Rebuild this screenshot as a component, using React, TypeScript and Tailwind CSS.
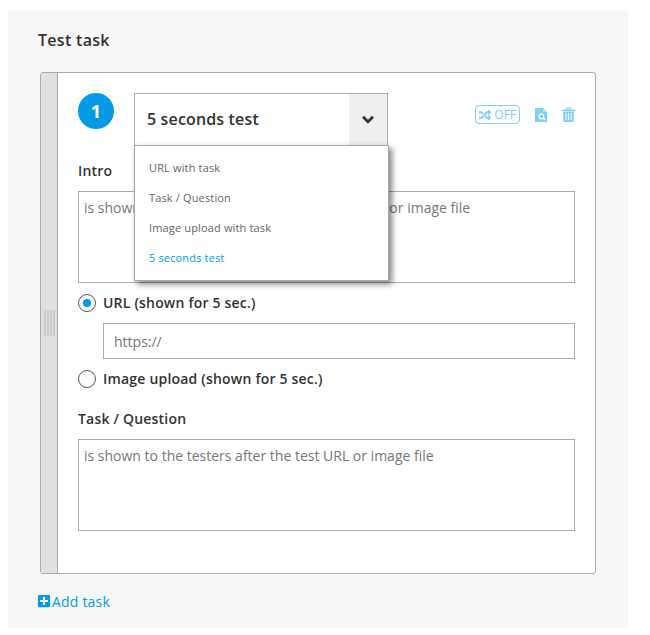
import { FaPlusSquare, FaRandom } from 'react-icons/fa';

const OPTIONS = ['URL with task', 'Task / Question', 'Image upload with task', '5 seconds test'];

function FileSearchIcon() {
  return (
    <svg width="12" height="14" viewBox="0 0 12 14" className="block" aria-hidden>
      <path d="M0 0h8l4 4v10H0z" fill="#7fd1f5" />
      <path d="M8 0l4 4H8z" fill="#b5e4fa" />
      <circle cx="6.4" cy="8.4" r="2.3" fill="none" stroke="#fff" strokeWidth="1.3" />
      <path d="M8 10l2 2" stroke="#fff" strokeWidth="1.4" />
    </svg>
  );
}

function TrashIcon() {
  return (
    <svg width="13" height="15" viewBox="0 0 13 15" className="block" aria-hidden>
      <path d="M4.5 2.5V1h4v1.5" fill="none" stroke="#7fd1f5" strokeWidth="1.2" />
      <path d="M0 2.5h13v1.5H0z" fill="#7fd1f5" />
      <path d="M1.2 4.6h10.6V13.5a1.5 1.5 0 0 1-1.5 1.5H2.7a1.5 1.5 0 0 1-1.5-1.5z" fill="#7fd1f5" />
      <path d="M4 6v7M6.5 6v7M9 6v7" stroke="#fff" strokeWidth="1" />
    </svg>
  );
}

function Chevron() {
  return (
    <svg width="14" height="9" viewBox="0 0 14 9" className="block" aria-hidden>
      <path d="M2 1.8l5 5 5-5" fill="none" stroke="#333333" strokeWidth="2.8" />
    </svg>
  );
}

function TaskTypeMenu() {
  return (
    <ul className="absolute left-[93px] top-[72px] z-10 h-[136px] w-[255px] border border-[#aaaaaa] bg-white py-[7px] shadow-[3px_3px_6px_rgba(0,0,0,0.5)]">
      {OPTIONS.map((label, i) => (
        <li
          key={label}
          className={`flex h-[30px] items-center pl-[14px] text-[11px] tracking-[0.15px] ${i === 3 ? 'text-[#039be5]' : 'text-[#666666]'}`}
        >
          {label}
        </li>
      ))}
    </ul>
  );
}

function Radio({ label, checked }: { label: string; checked?: boolean }) {
  return (
    <label className="flex h-[18px] items-center gap-[7px] text-[14px] font-semibold tracking-[0.2px] text-[#333333]">
      <span className="flex h-[18px] w-[18px] items-center justify-center rounded-full border border-[#555555] bg-white">
        {checked && <span className="h-2 w-2 rounded-full bg-[#039be5]" />}
      </span>
      <span className="mb-[2px]">{label}</span>
    </label>
  );
}

export default function App() {
  return (
    <div className="h-[635px] w-[650px] bg-white pl-2 pt-[10px] font-['Open_Sans',sans-serif]">
      <div className="h-[618px] w-[620px] bg-[#f7f7f7] pl-[30px] pt-[19px]">
        <h2 className="h-[22px] text-[16px] leading-[22px] font-semibold tracking-[0.3px] text-[#333333]">Test task</h2>

        <div className="relative mt-[21px] ml-[2px] flex h-[502px] w-[556px] rounded-[3px] border border-[#aaaaaa] bg-white">
          <div className="flex w-[17px] shrink-0 items-center justify-center rounded-l-[2px] border-r border-[#aaaaaa] bg-[#e0e0e0]">
            <div className="flex h-[26px] gap-[1px]">
              <span className="w-[2px] bg-[#cccccc]" />
              <span className="w-[2px] bg-[#cccccc]" />
              <span className="w-[2px] bg-[#cccccc]" />
              <span className="w-[2px] bg-[#cccccc]" />
            </div>
          </div>

          <div className="w-[538px] pl-5 pr-5 pt-5">
            <div className="flex">
              <div className="flex h-9 w-9 items-center justify-center rounded-full bg-[#039be5] text-[18px] font-bold text-white">
                1
              </div>
              <div className="ml-5 flex h-[53px] w-[254px] border border-[#aaaaaa] bg-white">
                <div className="flex flex-1 items-center pb-[2px] pl-3 text-[16px] font-semibold tracking-[0.15px] text-[#333333]">
                  5 seconds test
                </div>
                <div className="flex w-[38px] items-center justify-center bg-[#efefef]">
                  <Chevron />
                </div>
              </div>
              <div className="ml-[87px] mt-3 flex h-[19px] w-[45px] items-center justify-center gap-[3px] rounded-[4px] border border-[#7fd1f5] text-[12px] text-[#7fd1f5]">
                <FaRandom size={12} />
                OFF
              </div>
              <div className="ml-[15px] mt-[15px]">
                <FileSearchIcon />
              </div>
              <div className="ml-[15px] mt-[14px]">
                <TrashIcon />
              </div>
            </div>

            <div className="mt-[14px] text-[14px] leading-[22px] font-semibold tracking-[0.2px] text-[#333333]">Intro</div>
            <textarea
              className="mt-[9px] block h-[92px] w-[497px] resize-none border border-[#aaaaaa] bg-white px-[5px] py-[6px] text-[14px] leading-[20px] placeholder:text-[#777777]"
              placeholder="is shown to the testers before viewing the URL or image file"
            />

            <div className="mt-[11px]">
              <Radio label="URL (shown for 5 sec.)" checked />
            </div>
            <input
              className="mt-[11px] ml-[25px] block h-9 w-[472px] border border-[#aaaaaa] bg-white px-[10px] text-[14px] placeholder:text-[#777777]"
              placeholder="https://"
            />
            <div className="mt-[11px]">
              <Radio label="Image upload (shown for 5 sec.)" />
            </div>

            <div className="mt-5 text-[14px] leading-[22px] font-semibold tracking-[0.2px] text-[#333333]">Task / Question</div>
            <textarea
              className="mt-[9px] block h-[92px] w-[497px] resize-none border border-[#aaaaaa] bg-white px-[5px] py-[6px] text-[14px] leading-[20px] placeholder:text-[#777777]"
              placeholder="is shown to the testers after the test URL or image file"
            />
          </div>

          <TaskTypeMenu />
        </div>

        <div className="mt-[17px] flex h-5 items-center gap-[1px] text-[14px] tracking-[0.2px] text-[#039be5]">
          <FaPlusSquare size={14} className="-ml-[1px]" />
          Add task
        </div>
      </div>
    </div>
  );
}
